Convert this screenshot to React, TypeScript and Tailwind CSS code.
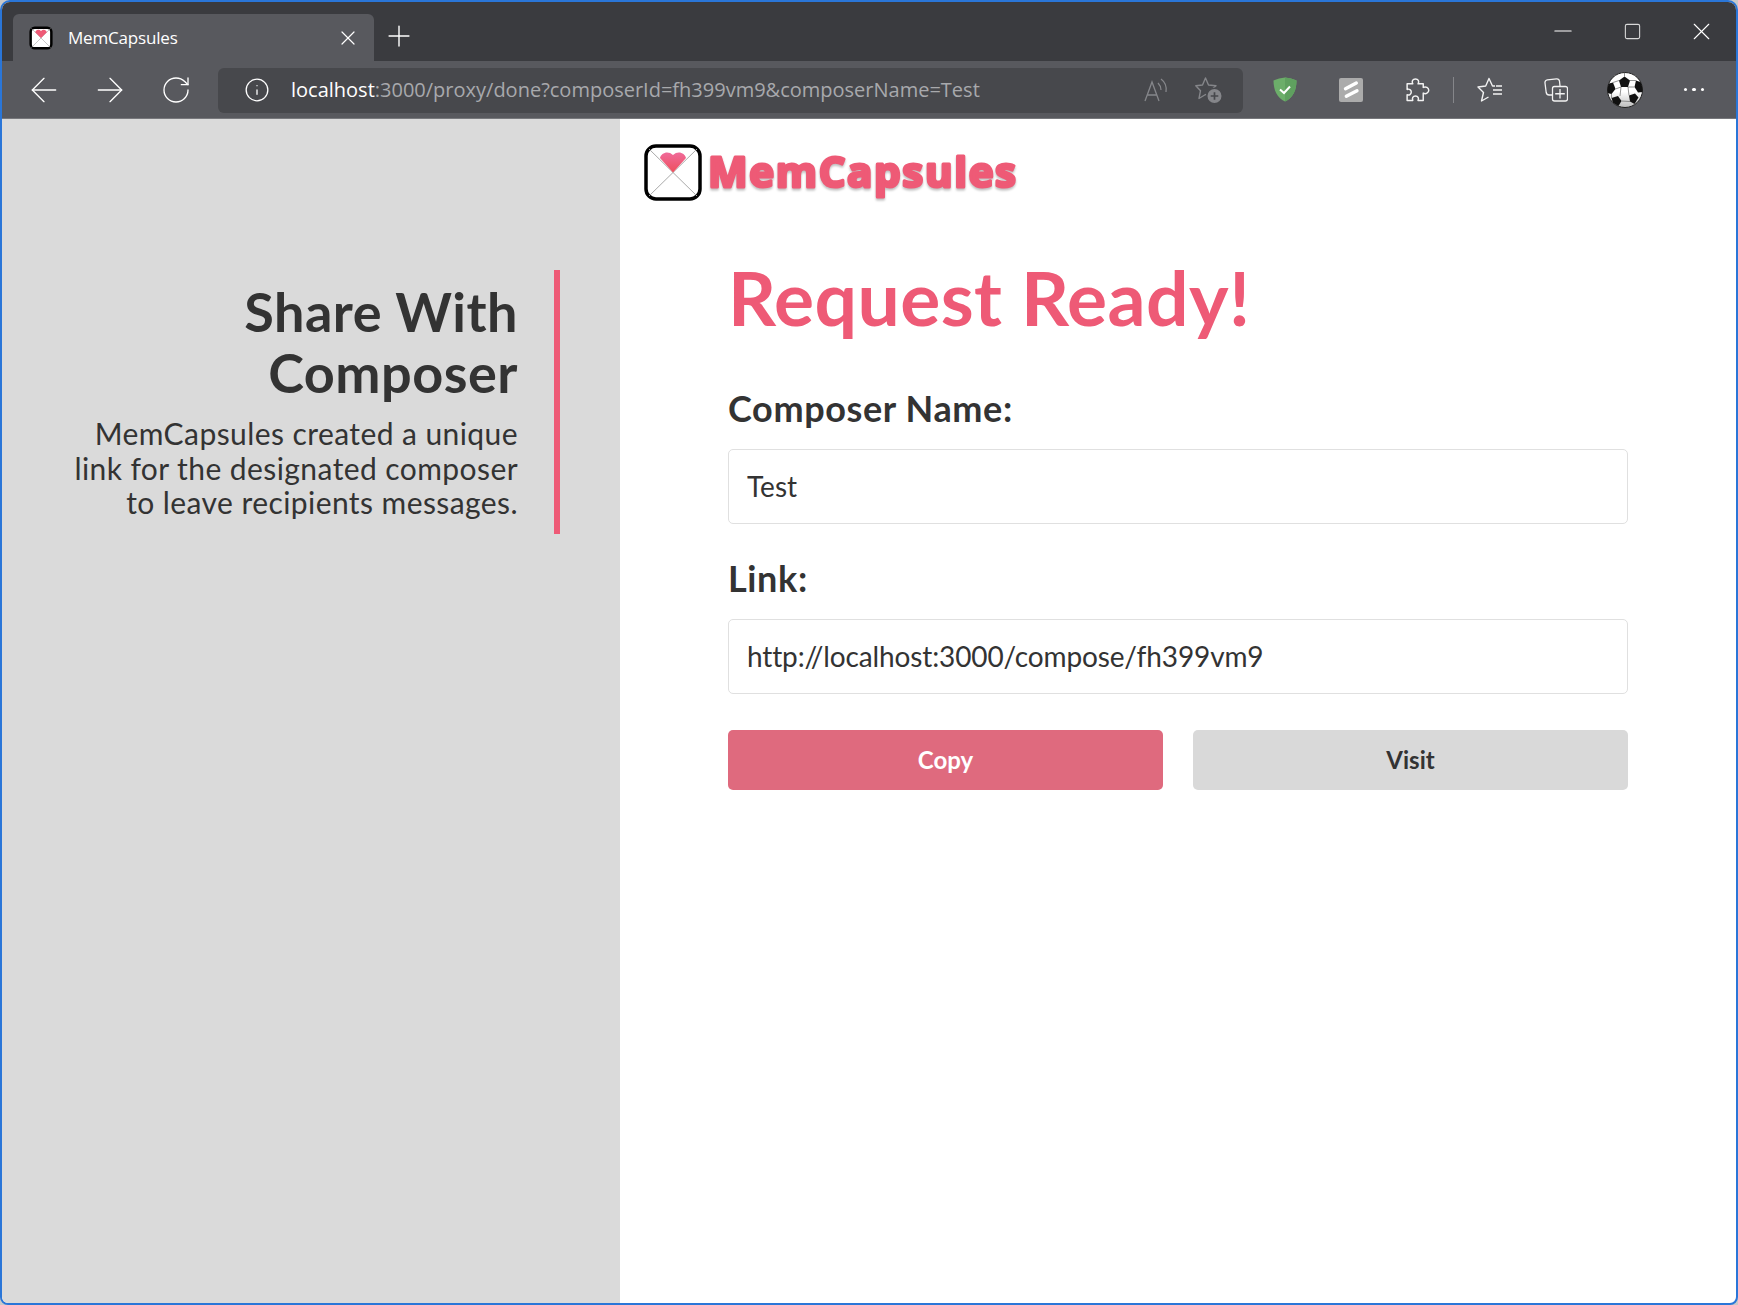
import { ArrowLeft, ArrowRight, Info, Minus, Plus, RotateCw, Square, X } from 'lucide-react'

function Slot({ children }: { children: React.ReactNode }) {
  return <div className="flex h-full w-[66px] shrink-0 items-center justify-center">{children}</div>
}

function Favicon() {
  return (
    <svg viewBox="0 0 58 58" className="h-[24px] w-[24px]">
      <rect x="4" y="4" width="50" height="50" rx="10" fill="#fff" stroke="#000" strokeWidth="6" />
      <path d="M6 6 L52 52 M52 6 L6 52" stroke="#aaa" strokeWidth="1.6" />
      <path d="M29 29 L15 15 C16 9 24 7 29 12 C34 7 42 9 43 15 Z" fill="#ee5a76" />
    </svg>
  )
}

function Logo() {
  return (
    <svg viewBox="0 0 58 57" className="ml-[2px] h-[57px] w-[58px] shrink-0">
      <defs>
        <linearGradient id="heart" x1="0" y1="0" x2="0" y2="1">
          <stop offset="0" stopColor="#f06a9a" />
          <stop offset="1" stopColor="#ee4f5c" />
        </linearGradient>
      </defs>
      <rect x="2" y="2" width="54" height="53" rx="10" fill="#fff" stroke="#000" strokeWidth="3.5" />
      <path d="M5 5 L53 52 M53 5 L5 52" stroke="#aaa" strokeWidth="1" />
      <path d="M29 28.5 L16 14 C17 9 24 6 29 11 C34 6 41 9 42 14 Z" fill="url(#heart)" />
    </svg>
  )
}

function Wordmark() {
  return (
    <svg viewBox="0 0 340 66" className="ml-[4px] h-[66px] w-[340px] overflow-visible">
      <text
        x="2"
        y="43"
        textLength="308"
        lengthAdjust="spacing"
        fontFamily="'Open Sans', sans-serif"
        fontWeight="700"
        fontSize="42"
        fill="#ee5a76"
        stroke="#ee5a76"
        strokeWidth="3"
        strokeLinejoin="round"
        className="[filter:drop-shadow(0_2px_1px_rgba(0,0,0,0.25))]"
      >
        MemCapsules
      </text>
    </svg>
  )
}

function ReadAloud() {
  return (
    <svg viewBox="0 0 26 26" className="h-[26px] w-[26px]" fill="none" stroke="#85868a" strokeWidth="1.3">
      <path d="M2 24 L9 5 L16 24 M4.5 18 H13.5" />
      <path d="M15 6 C17 8 18 10 18 13 M18 2 C22 5 24 9 23 15" />
    </svg>
  )
}

function StarAdd() {
  return (
    <svg viewBox="0 0 28 28" className="h-[28px] w-[28px]" fill="none" stroke="#85868a" strokeWidth="1.4">
      <path d="M10.5 2 L13.5 9 L21 9.7 L15.5 14.7 L17 22 L10.5 18.5 L4 22.5 L5.5 14.7 L0.8 9.7 L7.5 9 Z" strokeLinejoin="round" />
      <circle cx="19.5" cy="20" r="7.8" fill="#85868a" stroke="#47484c" strokeWidth="1.6" />
      <path d="M19.5 16.2 V23.8 M15.7 20 H23.3" stroke="#47484c" strokeWidth="1.7" />
    </svg>
  )
}

function Shield() {
  return (
    <svg viewBox="0 0 24 25" className="h-[25px] w-[24px]">
      <path d="M12 0.5 C16 0.8 20 2 23.5 3.5 C23.5 13 20 21 12 24.5 C4 21 0.5 13 0.5 3.5 C4 2 8 0.8 12 0.5 Z" fill="#6cae6a" />
      <path d="M12 0.5 C16 0.8 20 2 23.5 3.5 C23.5 13 20 21 12 24.5 Z" fill="#5fa05f" />
      <path d="M7 12.5 L11 16 L17 9.5" fill="none" stroke="#fff" strokeWidth="2" />
    </svg>
  )
}

function SlashBox() {
  return (
    <svg viewBox="0 0 24 24" className="h-[24px] w-[24px]">
      <rect width="24" height="24" rx="2" fill="#ababab" />
      <path d="M6.5 10.7 L17.3 5 M7.3 18.3 L18 12.7" stroke="#fff" strokeWidth="3.4" strokeLinecap="round" />
    </svg>
  )
}

function Extensions() {
  return (
    <svg viewBox="0 0 25 23" className="h-[24px] w-[26px]" fill="none" stroke="#f2f2f2" strokeWidth="1.4" strokeLinejoin="round">
      <path d="M8.5 5.5 C7 3 8.5 1 11 1 C13.5 1 15 3 13.5 5.5 H18.5 V9 C21 7.8 23.8 9.3 23.8 11.8 C23.8 14.3 21 15.8 18.5 14.5 V21.5 H13.5 C14.5 19.3 13.5 17.3 11 17.3 C8.5 17.3 7.5 19.3 8.5 21.5 H3 V16 C5 17 7 15.5 7 13.5 C7 11.5 5 10 3 11 V5.5 Z" />
    </svg>
  )
}

function Favorites() {
  return (
    <svg viewBox="0 0 26 26" className="h-[26px] w-[26px]" fill="none" stroke="#f2f2f2" strokeWidth="1.4" strokeLinejoin="round">
      <path d="M18 9 H15.5 L12 1.5 L8.7 9 L1 10 L6.5 15.5 L4.5 24 L11.5 20" />
      <path d="M16 13 H25 M16 17 H25 M19 9 H25" />
    </svg>
  )
}

function Collections() {
  return (
    <svg viewBox="0 0 24 24" className="h-[24px] w-[24px]" fill="none" stroke="#f2f2f2" strokeWidth="1.3" strokeLinejoin="round">
      <rect x="8.5" y="8.5" width="15" height="14.5" rx="2" />
      <path d="M8 17 H5 C3.5 17 2.5 16 2.2 14.5 L1 5 C0.8 3.5 1.8 2 3.3 1.8 L12.5 0.8 C14 0.7 15.3 1.7 15.5 3.2 L16 8" />
      <path d="M16 11 V20.5 M11.2 15.75 H20.8" />
    </svg>
  )
}

function Ball() {
  return (
    <svg viewBox="0 0 36 36" className="h-[36px] w-[36px]">
      <defs>
        <clipPath id="ball">
          <circle cx="18" cy="18" r="17.5" />
        </clipPath>
        <linearGradient id="ballfill" x1="0" y1="0" x2="0" y2="1">
          <stop offset="0.55" stopColor="#fff" />
          <stop offset="1" stopColor="#bbb" />
        </linearGradient>
      </defs>
      <circle cx="18" cy="18" r="17.5" fill="url(#ballfill)" stroke="#222" strokeWidth="1" />
      <g clipPath="url(#ball)">
        <path d="M17.5 4.5 L23 8.5 L21 15 L14 15 L12 8.5 Z" fill="#111" />
        <path d="M0 12 L6 10.5 L8.5 17 L4.5 22 L0 21 Z" fill="#111" />
        <path d="M29 8.5 L36 11 L36 20 L31 20.5 L27.5 15 Z" fill="#111" />
        <path d="M4.5 26 L11 24 L14.5 29 L11.5 34 L6 31 Z" fill="#111" />
        <path d="M22 23.5 L28 21.5 L31.5 25.5 L27.5 32 L23 29.5 Z" fill="#111" />
        <path d="M17.5 4.5 L17.5 0 M12 8.5 L6 10.5 M23 8.5 L29 8.5 M14 15 L8.5 17 M21 15 L27.5 15 M4.5 22 L4.5 26 M14.5 29 L23 29.5 M14 15 L13 24 M21 15 L22 23.5 M11.5 34 L14 36 M27.5 32 L26 36" stroke="#666" strokeWidth="0.7" />
      </g>
    </svg>
  )
}

export default function App() {
  return (
    <div className="h-screen w-full overflow-hidden bg-[#c9c9c9] font-['Lato',sans-serif]">
      <div className="flex h-full flex-col overflow-hidden rounded-t-[10px] rounded-b-[8px] border-2 border-[#2a76d8] bg-white">
        {/* Tab strip */}
        <div className="flex h-[59px] shrink-0 items-end bg-[#3a3b3f] pl-[11px]">
          <div className="flex h-[47px] w-[361px] items-center rounded-t-[6px] bg-[#58595e] pl-[16px] pr-[14px]">
            <Favicon />
            <span className="ml-[15px] font-['Open_Sans',sans-serif] text-[17px] tracking-[-0.18px] text-white">MemCapsules</span>
            <X className="ml-auto text-white" size={24} strokeWidth={1.2} />
          </div>
          <div className="ml-[4px] flex h-[48px] w-[42px] items-center justify-center pb-[2px] text-white">
            <Plus size={34} strokeWidth={1} />
          </div>
          <div className="ml-auto flex h-full items-start pt-[11px] text-white">
            <div className="flex h-[36px] w-[68px] items-center justify-center">
              <Minus size={28} strokeWidth={0.9} />
            </div>
            <div className="flex h-[36px] w-[70px] items-center justify-center">
              <Square size={19} strokeWidth={1.4} className="text-[#d8d8d8]" />
            </div>
            <div className="mr-[1px] flex h-[36px] w-[68px] items-center justify-center">
              <X size={29} strokeWidth={0.95} />
            </div>
          </div>
        </div>

        {/* Toolbar */}
        <div className="flex h-[58px] shrink-0 items-center border-b border-[#77787c] bg-[#58595e] pl-[9px] text-white">
          <Slot><ArrowLeft size={40} strokeWidth={0.8} /></Slot>
          <Slot><ArrowRight size={40} strokeWidth={0.8} /></Slot>
          <Slot><RotateCw size={32} strokeWidth={1} /></Slot>
          <div className="ml-[9px] mt-[1px] flex h-[45px] w-[1025px] items-center rounded-[6px] bg-[#47484c] pl-[26px] pr-[20px]">
            <Info size={26} strokeWidth={1.2} />
            <span className="ml-[21px] font-['Open_Sans',sans-serif] text-[20px] text-[#a8a9ac]">
              <span className="text-white">localhost</span>:3000/proxy/done?composerId=fh399vm9&amp;composerName=Test
            </span>
            <div className="ml-auto flex items-center gap-[26px]">
              <ReadAloud />
              <StarAdd />
            </div>
          </div>
          <div className="ml-[9px] flex h-full items-center">
            <Slot><Shield /></Slot>
            <Slot><SlashBox /></Slot>
            <Slot><Extensions /></Slot>
            <div className="mx-[3px] h-[26px] w-[1px] bg-[#85868a]" />
            <Slot><Favorites /></Slot>
            <Slot><Collections /></Slot>
            <div className="ml-[3px]"><Slot><Ball /></Slot></div>
            <div className="ml-[3px]">
              <Slot>
                <div className="flex gap-[5px]">
                  <span className="h-[3.5px] w-[3.5px] rounded-full bg-white" />
                  <span className="h-[3.5px] w-[3.5px] rounded-full bg-white" />
                  <span className="h-[3.5px] w-[3.5px] rounded-full bg-white" />
                </div>
              </Slot>
            </div>
          </div>
        </div>

        {/* Page */}
        <div className="flex min-h-0 flex-1">
          <aside className="flex w-[618px] shrink-0 items-start justify-end bg-[#dadada] pr-[60px] pt-[151px]">
            <div className="h-[264px] w-[500px] border-r-[6px] border-[#ee5a76] pr-[36px] pt-[11px] text-right text-[#333]">
              <h2 className="text-[54px] font-bold leading-[61px] tracking-[0.5px]">Share With<br />Composer</h2>
              <p className="mt-[13px] text-[30px] leading-[34.5px] tracking-[0.42px]">
                MemCapsules created a unique link for the designated composer to leave recipients messages.
              </p>
            </div>
          </aside>
          <main className="flex-1 pl-[22px] pr-[108px] pt-[25px]">
            <div className="flex items-start">
              <Logo />
              <Wordmark />
            </div>
            <div className="pl-[86px]">
              <h1 className="mt-[44px] text-[75px] font-bold leading-[86px] tracking-[0.4px] text-[#ee5a76]">Request Ready!</h1>
              <div className="mt-[47px] text-[36px] font-bold leading-[42px] tracking-[0.63px] text-[#333]">Composer Name:</div>
              <div className="mt-[20px] flex h-[75px] items-center rounded-[5px] border-[1.5px] border-[#e0e0e0] px-[18px] pb-[2px] text-[28px] text-[#333]">Test</div>
              <div className="mt-[33px] text-[36px] font-bold leading-[42px] tracking-[0.63px] text-[#333]">Link:</div>
              <div className="mt-[20px] flex h-[75px] items-center rounded-[5px] border-[1.5px] border-[#e0e0e0] px-[18px] pb-[2px] text-[28px] tracking-[-0.13px] text-[#333]">http://localhost:3000/compose/fh399vm9</div>
              <div className="mt-[36px] flex gap-[30px]">
                <button className="h-[60px] flex-1 rounded-[5px] bg-[#df6a7e] text-[24px] font-bold text-white">Copy</button>
                <button className="h-[60px] flex-1 rounded-[5px] bg-[#d9d9d9] text-[24px] font-bold text-[#333]">Visit</button>
              </div>
            </div>
          </main>
        </div>
      </div>
    </div>
  )
}
